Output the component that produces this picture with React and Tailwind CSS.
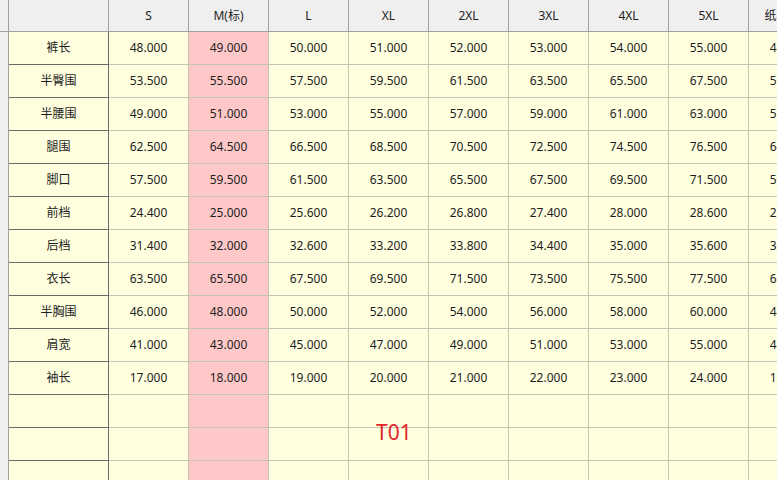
import React from 'react';

const sizes = ['S', 'M(标)', 'L', 'XL', '2XL', '3XL', '4XL', '5XL', '纸样尺寸'];

const rows = [
  ['裤长', ['48.000', '49.000', '50.000', '51.000', '52.000', '53.000', '54.000', '55.000', '48.000']],
  ['半臀围', ['53.500', '55.500', '57.500', '59.500', '61.500', '63.500', '65.500', '67.500', '55.500']],
  ['半腰围', ['49.000', '51.000', '53.000', '55.000', '57.000', '59.000', '61.000', '63.000', '51.000']],
  ['腿围', ['62.500', '64.500', '66.500', '68.500', '70.500', '72.500', '74.500', '76.500', '64.500']],
  ['脚口', ['57.500', '59.500', '61.500', '63.500', '65.500', '67.500', '69.500', '71.500', '59.500']],
  ['前档', ['24.400', '25.000', '25.600', '26.200', '26.800', '27.400', '28.000', '28.600', '25.000']],
  ['后档', ['31.400', '32.000', '32.600', '33.200', '33.800', '34.400', '35.000', '35.600', '32.000']],
  ['衣长', ['63.500', '65.500', '67.500', '69.500', '71.500', '73.500', '75.500', '77.500', '65.500']],
  ['半胸围', ['46.000', '48.000', '50.000', '52.000', '54.000', '56.000', '58.000', '60.000', '48.000']],
  ['肩宽', ['41.000', '43.000', '45.000', '47.000', '49.000', '51.000', '53.000', '55.000', '43.000']],
  ['袖长', ['17.000', '18.000', '19.000', '20.000', '21.000', '22.000', '23.000', '24.000', '18.000']],
  ['', ['', '', '', '', '', '', '', '', '']],
  ['', ['', '', '', '', '', '', '', '', '']],
  ['', ['', '', '', '', '', '', '', '', '']],
];

export default function App() {
  return (
    <div
      className="relative w-[777px] h-[480px] overflow-hidden bg-[#ffffe0] text-[12px] text-[#1e1e1e]"
      style={{ fontFamily: '"Noto Sans", "Noto Sans CJK SC", sans-serif' }}
    >
      <div className="grid grid-cols-[9px_100px_repeat(9,80px)] grid-rows-[32px_repeat(14,33px)] w-max">
        {/* header */}
        <div className="bg-[#efefef] border-r border-b border-[#a0a0a0]" />
        <div className="bg-[#efefef] border-r border-b border-[#a0a0a0]" />
        {sizes.map((s) => (
          <div
            key={s}
            className="bg-[#efefef] border-r border-b border-[#a0a0a0] flex items-center justify-center whitespace-nowrap"
          >
            {s}
          </div>
        ))}

        {rows.map(([name, vals], i) => (
          <React.Fragment key={i}>
            <div className="bg-[#efefef] border-r border-[#a0a0a0]" />
            <div className="border-r border-b border-[#6a6a6a] flex items-center justify-center">
              {name}
            </div>
            {vals.map((v, j) => (
              <div
                key={j}
                className={`border-r border-b border-[#c4c4b4] flex items-center justify-center ${
                  j === 1 ? 'bg-[#ffc8c8]' : ''
                }`}
              >
                {v}
              </div>
            ))}
          </React.Fragment>
        ))}
      </div>

      <div
        className="absolute left-[376px] top-[418px] text-[21px] leading-[28px] text-[#e3262c]"
        style={{ fontFamily: '"Noto Sans", sans-serif' }}
      >
        T01
      </div>
    </div>
  );
}
